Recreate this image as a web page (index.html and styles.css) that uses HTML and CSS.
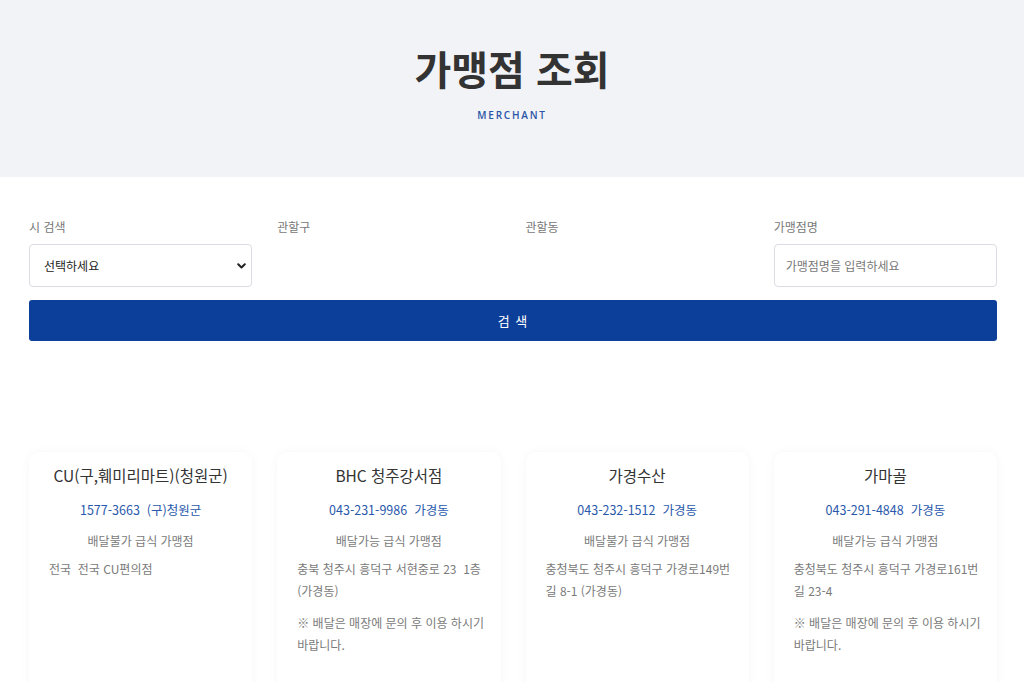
FILE: index.html
```html
<!DOCTYPE html>
<html lang="ko">
<head>
<meta charset="utf-8">
<title>가맹점 조회</title>
<link rel="stylesheet" href="styles.css">
</head>
<body>
<header class="hero">
  <h1 class="hero-title">가맹점 조회</h1>
  <p class="hero-sub">MERCHANT</p>
</header>

<section class="search">
  <div class="fields">
    <div class="field">
      <label class="label">시 검색</label>
      <div class="select-box">
        <span>선택하세요</span>
        <svg class="chev" width="9" height="6" viewBox="0 0 9 6"><path d="M1.2 1.2 L4.5 4.5 L7.8 1.2" fill="none" stroke="#222" stroke-width="2" stroke-linecap="round" stroke-linejoin="round"/></svg>
      </div>
    </div>
    <div class="field">
      <label class="label">관할구</label>
    </div>
    <div class="field">
      <label class="label">관할동</label>
    </div>
    <div class="field">
      <label class="label">가맹점명</label>
      <div class="input-box">가맹점명을 입력하세요</div>
    </div>
  </div>
  <button class="btn">검 색</button>
</section>

<section class="cards">
  <article class="card">
    <h3 class="card-title">CU(구,훼미리마트)(청원군)</h3>
    <p class="card-phone">1577-3663&nbsp;&nbsp;(구)청원군</p>
    <p class="card-type">배달불가 급식 가맹점</p>
    <p class="card-addr">전국&nbsp;&nbsp;전국 CU편의점</p>
  </article>
  <article class="card">
    <h3 class="card-title">BHC 청주강서점</h3>
    <p class="card-phone">043-231-9986&nbsp;&nbsp;가경동</p>
    <p class="card-type">배달가능 급식 가맹점</p>
    <p class="card-addr">충북 청주시 흥덕구 서현중로 23&nbsp;&nbsp;1층 (가경동)</p>
    <p class="card-note">※ 배달은 매장에 문의 후 이용 하시기 바랍니다.</p>
  </article>
  <article class="card">
    <h3 class="card-title">가경수산</h3>
    <p class="card-phone">043-232-1512&nbsp;&nbsp;가경동</p>
    <p class="card-type">배달불가 급식 가맹점</p>
    <p class="card-addr">충청북도 청주시 흥덕구 가경로149번길 8-1 (가경동)</p>
  </article>
  <article class="card">
    <h3 class="card-title">가마골</h3>
    <p class="card-phone">043-291-4848&nbsp;&nbsp;가경동</p>
    <p class="card-type">배달가능 급식 가맹점</p>
    <p class="card-addr">충청북도 청주시 흥덕구 가경로161번길 23-4</p>
    <p class="card-note">※ 배달은 매장에 문의 후 이용 하시기 바랍니다.</p>
  </article>
</section>
</body>
</html>
```

FILE: styles.css
```css
* { box-sizing: border-box; }
html, body { margin: 0; padding: 0; }
body {
  background: #fff;
  font-family: "Noto Sans CJK KR", "Noto Sans", sans-serif;
  color: #333;
  overflow: hidden;
}
.hero {
  background: #f2f3f7;
  height: 177px;
  padding-top: 40px;
  text-align: center;
}
.hero-title {
  margin: 0;
  font-size: 40px;
  line-height: 56px;
  font-weight: 700;
  color: #333;
}
.hero-sub {
  margin: 12px 0 0;
  font-size: 10px;
  line-height: 14px;
  letter-spacing: 1.8px;
  color: #2a55a6;
  font-family: "Open Sans", "Noto Sans", sans-serif;
  font-weight: 600;
}
.search {
  padding: 41px 27px 0 29px;
}
.fields {
  display: grid;
  grid-template-columns: repeat(4, 1fr);
  column-gap: 25px;
}
.label {
  display: block;
  font-size: 12px;
  line-height: 18px;
  color: #777;
  margin-bottom: 8px;
}
.select-box, .input-box {
  height: 43px;
  border: 1px solid #dadde2;
  border-radius: 4px;
  display: flex;
  align-items: center;
  font-size: 12px;
}
.select-box {
  justify-content: space-between;
  padding: 0 5px 0 14px;
  color: #222;
}
.input-box {
  padding: 0 11px;
  color: #777;
}
.btn {
  display: block;
  width: 100%;
  margin-top: 13px;
  height: 41px;
  border: none;
  border-radius: 3px;
  background: #0b3f99;
  color: #fff;
  font-family: inherit;
  font-size: 13px;
  letter-spacing: 1px;
}
.cards {
  display: grid;
  grid-template-columns: repeat(4, 1fr);
  column-gap: 25px;
  padding: 0 27px 0 29px;
  margin-top: 111px;
}
.card {
  height: 260px;
  border-radius: 10px;
  background: #fff;
  box-shadow: 0 0 12px rgba(40, 60, 110, 0.035);
  padding: 12px 12px 0 20px;
}
.card-title {
  margin: 0 0 0 -8px;
  text-align: center;
  font-size: 15.5px;
  line-height: 22px;
  font-weight: 400;
  color: #333;
}
.card-phone {
  margin: 15px 0 0 -8px;
  text-align: center;
  font-size: 12.5px;
  line-height: 18px;
  color: #2a59ab;
}
.card-type {
  margin: 13px 0 0 -8px;
  text-align: center;
  font-size: 12px;
  line-height: 18px;
  color: #7a7a7a;
}
.card-addr, .card-note {
  margin: 8px 0 0;
  font-size: 12px;
  line-height: 22px;
  color: #7a7a7a;
}
.card-note {
  margin-top: 10px;
}
```
